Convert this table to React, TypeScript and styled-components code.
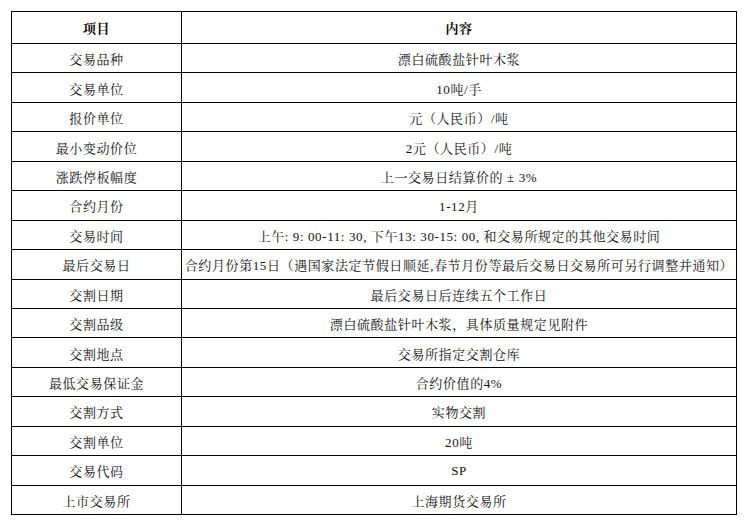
import React from "react";
import styled, { createGlobalStyle } from "styled-components";

const Global = createGlobalStyle`
  html, body { margin: 0; padding: 0; background: #ffffff; }
  body { font-family: "Liberation Serif", "Noto Serif CJK SC", "Noto Sans CJK SC", serif; }
`;

const Page = styled.div`
  padding: 11px 0 0 11px;
  width: 748px;
  height: 531px;
  box-sizing: border-box;
`;

const Table = styled.table`
  border-collapse: collapse;
  table-layout: fixed;
  width: 725px;
  color: #111;
  font-size: 13px;
  letter-spacing: 0.6px;
`;

const HeadCell = styled.th`
  border: 1px solid #000;
  height: 31px;
  padding: 0;
  font-weight: bold;
  text-align: center;
  vertical-align: middle;
`;

const Cell = styled.td`
  border: 1px solid #000;
  height: 27.44px;
  padding: 1px 0 0 0;
  text-align: center;
  vertical-align: middle;
  white-space: nowrap;
`;

const rows: [string, string][] = [
  ["交易品种", "漂白硫酸盐针叶木浆"],
  ["交易单位", "10吨/手"],
  ["报价单位", "元（人民币）/吨"],
  ["最小变动价位", "2元（人民币）/吨"],
  ["涨跌停板幅度", "上一交易日结算价的 ± 3%"],
  ["合约月份", "1-12月"],
  ["交易时间", "上午:  9: 00-11: 30, 下午13: 30-15: 00,  和交易所规定的其他交易时间"],
  ["最后交易日", "合约月份第15日（遇国家法定节假日顺延,春节月份等最后交易日交易所可另行调整并通知）"],
  ["交割日期", "最后交易日后连续五个工作日"],
  ["交割品级", "漂白硫酸盐针叶木浆，具体质量规定见附件"],
  ["交割地点", "交易所指定交割仓库"],
  ["最低交易保证金", "合约价值的4%"],
  ["交割方式", "实物交割"],
  ["交割单位", "20吨"],
  ["交易代码", "SP"],
  ["上市交易所", "上海期货交易所"],
];

export default function App() {
  return (
    <>
      <Global />
      <Page>
        <Table>
          <colgroup>
            <col style={{ width: 170 }} />
            <col style={{ width: 555 }} />
          </colgroup>
          <thead>
            <tr>
              <HeadCell>项目</HeadCell>
              <HeadCell>内容</HeadCell>
            </tr>
          </thead>
          <tbody>
            {rows.map(([k, v]) => (
              <tr key={k}>
                <Cell>{k}</Cell>
                <Cell>{v}</Cell>
              </tr>
            ))}
          </tbody>
        </Table>
      </Page>
    </>
  );
}
